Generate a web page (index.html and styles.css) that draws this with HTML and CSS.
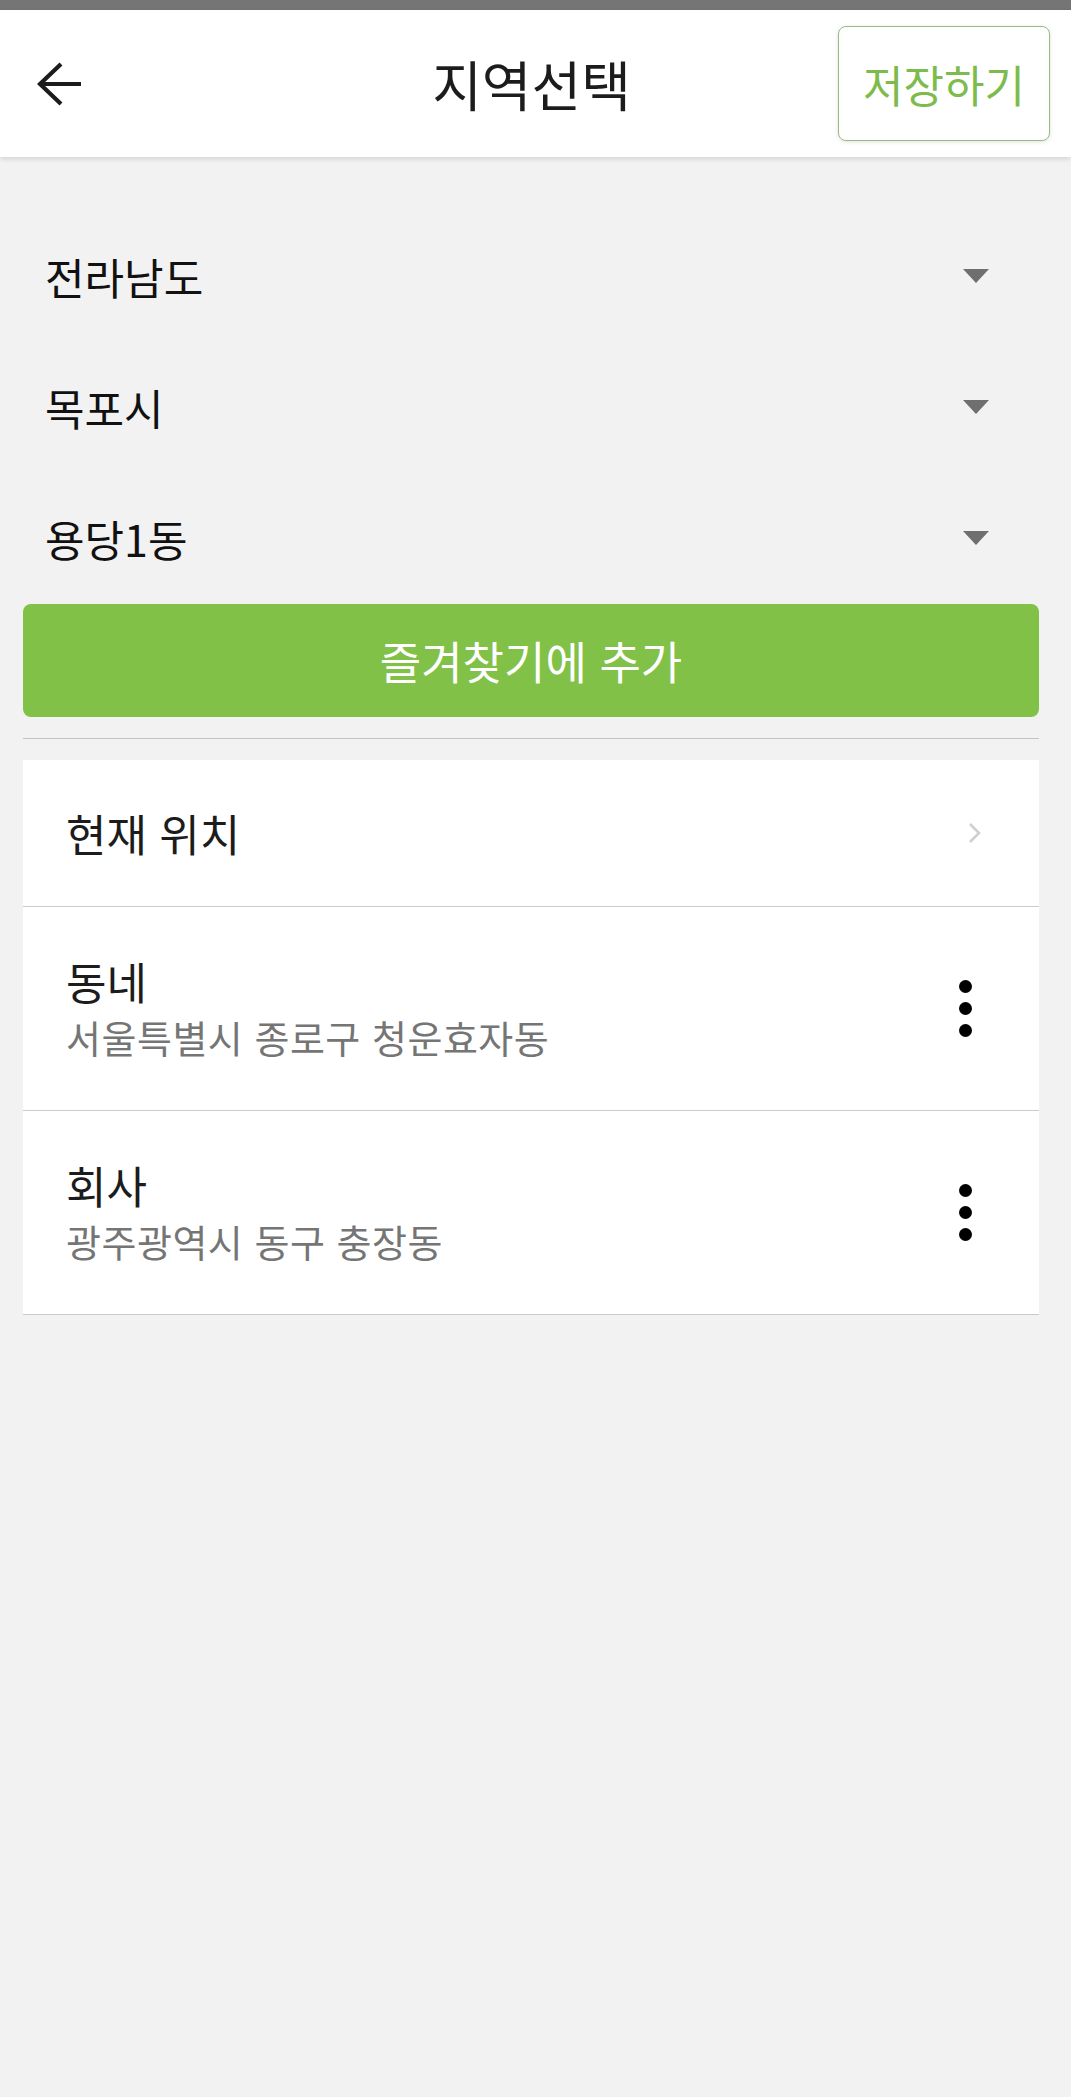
FILE: index.html
```html
<!DOCTYPE html>
<html lang='ko'>

<head>
    <meta charset='utf-8' />
    <meta name='viewport' content='width=device-width, initial-scale=1, user-scalable=no' />
    <title>지역선택</title>
    <link rel="stylesheet" href="styles.css">
</head>

<body>
    <div class='statusbar'></div>
    <header class='appbar'>
        <div class='appbar-left'>
            <button type='button' class='btn-back' aria-label='뒤로'>
                <svg width='44' height='44' viewBox='0 0 44 44'>
                    <path d='M44 22H4M24 2L3 22l21 20' fill='none' stroke='#1c1c1c' stroke-width='4.2' />
                </svg>
            </button>
        </div>
        <h1 class='appbar-title'>지역선택</h1>
        <div class='appbar-right'>
            <button type='button' class='btn-save'>저장하기</button>
        </div>
    </header>

    <main class='content'>
        <div class='selects'>
            <div class='select-row'>
                <span>전라남도</span>
                <i class='caret'></i>
            </div>
            <div class='select-row'>
                <span>목포시</span>
                <i class='caret'></i>
            </div>
            <div class='select-row'>
                <span>용당1동</span>
                <i class='caret'></i>
            </div>
        </div>

        <button type='button' class='btn-fav'>즐겨찾기에 추가</button>

        <hr class='divider'>

        <ul class='places'>
            <li class='place place-current'>
                <div class='place-text'>
                    <div class='place-name'>현재 위치</div>
                </div>
                <svg class='chevron' width='16' height='22' viewBox='0 0 16 22'>
                    <path d='M3 2l9 9-9 9' fill='none' stroke='#cfcfcf' stroke-width='2.6' />
                </svg>
            </li>
            <li class='place'>
                <div class='place-text'>
                    <div class='place-name'>동네</div>
                    <div class='place-addr'>서울특별시 종로구 청운효자동</div>
                </div>
                <div class='more'><b></b><b></b><b></b></div>
            </li>
            <li class='place'>
                <div class='place-text'>
                    <div class='place-name'>회사</div>
                    <div class='place-addr'>광주광역시 동구 충장동</div>
                </div>
                <div class='more'><b></b><b></b><b></b></div>
            </li>
        </ul>
    </main>
</body>

</html>
```

FILE: styles.css
```css
body {
    margin: 0;
    font-family: 'Noto Sans CJK KR', 'Noto Sans', sans-serif;
    color: #1c1c1c;
    background-color: #f2f2f2;
    min-height: 2097px;
}

.statusbar {
    height: 10px;
    background-color: #757575;
}

.appbar {
    height: 147px;
    background-color: #ffffff;
    display: grid;
    grid-template-columns: 1fr auto 1fr;
    align-items: center;
    box-shadow: 0 2px 5px rgba(0, 0, 0, .13);
    position: relative;
}

.appbar-left {
    padding-left: 37px;
}

.appbar-right {
    display: flex;
    justify-content: flex-end;
    padding-right: 21px;
}

.appbar-title {
    margin: 0;
    font-size: 54px;
    font-weight: 400;
    color: #1c1c1c;
    padding-right: 8px;
}

.btn-back {
    border: 0;
    padding: 0;
    background: none;
    display: block;
}

.btn-back svg {
    display: block;
}

.btn-save {
    width: 212px;
    height: 115px;
    border: 1.5px solid #98bb80;
    border-radius: 8px;
    background-color: #ffffff;
    color: #7dbb4c;
    font-family: inherit;
    font-size: 44px;
    padding: 0;
    box-shadow: 0 1px 4px rgba(0, 0, 0, .12);
}

.content {
    padding: 55px 32px 0 23px;
}

.select-row {
    height: 131px;
    display: flex;
    align-items: center;
    justify-content: space-between;
    padding: 0 50px 4px 22px;
    box-sizing: border-box;
    font-size: 43px;
    color: #111111;
}

.caret {
    width: 0;
    height: 0;
    border-left: 13px solid transparent;
    border-right: 13px solid transparent;
    border-top: 14px solid #6f6f6f;
}

.btn-fav {
    display: block;
    width: 100%;
    height: 113px;
    margin-top: -1px;
    border: 0;
    border-radius: 8px;
    background-color: #82c148;
    color: #ffffff;
    font-family: inherit;
    font-size: 45px;
}

.divider {
    margin: 21px 0 21px;
    border: 0;
    border-top: 1.5px solid #c4c4c4;
}

.places {
    list-style: none;
    margin: 0;
    padding: 0;
    background-color: #ffffff;
}

.place {
    height: 203px;
    display: flex;
    align-items: center;
    justify-content: space-between;
    padding: 0 67px 0 43px;
    border-bottom: 1.5px solid #cacaca;
}

.place-current {
    height: 146px;
    padding-right: 56px;
}

.place-name {
    font-size: 44px;
    line-height: 56px;
    color: #1c1c1c;
}

.place-addr {
    font-size: 38px;
    letter-spacing: .5px;
    line-height: 56px;
    color: #757575;
}

.more {
    display: flex;
    flex-direction: column;
    gap: 9px;
}

.more b {
    width: 13px;
    height: 13px;
    border-radius: 50%;
    background-color: #000000;
}
```
